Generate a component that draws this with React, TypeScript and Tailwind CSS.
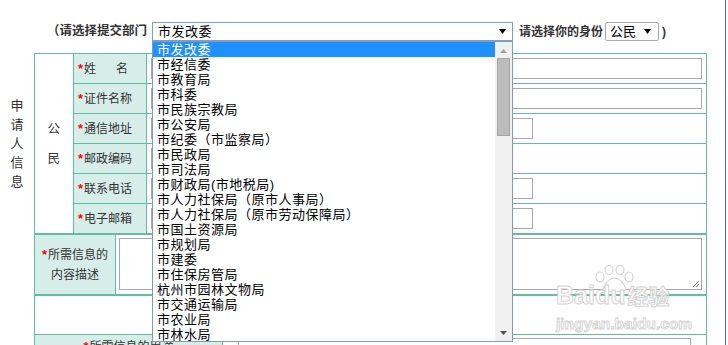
import React from 'react';

const depts = [
  '市发改委',
  '市经信委',
  '市教育局',
  '市科委',
  '市民族宗教局',
  '市公安局',
  '市纪委（市监察局）',
  '市民政局',
  '市司法局',
  '市财政局(市地税局)',
  '市人力社保局（原市人事局）',
  '市人力社保局（原市劳动保障局）',
  '市国土资源局',
  '市规划局',
  '市建委',
  '市住保房管局',
  '杭州市园林文物局',
  '市交通运输局',
  '市农业局',
  '市林水局',
];

const rows: { label: React.ReactNode; input: string }[] = [
  { label: <>姓<span className="ml-[20px]">名</span></>, input: 'w-[551px]' },
  { label: '证件名称', input: 'w-[551px]' },
  { label: '通信地址', input: 'w-[382px]' },
  { label: '邮政编码', input: 'w-[120px]' },
  { label: '联系电话', input: 'w-[382px]' },
  { label: '电子邮箱', input: 'w-[382px]' },
];

function Caret({ className }: { className?: string }) {
  return (
    <svg width="7" height="5" viewBox="0 0 7 5" className={className}>
      <path d="M0 0h7L3.5 5z" fill="currentColor" />
    </svg>
  );
}

function Star() {
  return <span className="text-[#ff0000] text-[13px] font-bold mr-[1px]">*</span>;
}

export default function App() {
  return (
    <div className="relative w-[728px] h-[345px] overflow-hidden bg-white font-['Liberation_Sans','Noto_Sans_CJK_SC',sans-serif] text-[#333]">
      <div className="w-[726px] h-[345px] border-r border-[#47786e]">
        {/* header */}
        <div className="flex items-center pt-[22px] pl-[47px] h-[41px]">
          <span className="w-[105px] text-[12.5px] font-bold whitespace-nowrap">（请选择提交部门</span>
          <div className="w-[361px] h-[19px] border border-[#7a9fd6] flex items-center justify-between pl-[5px] pr-[6px] text-[13px] tracking-[0.5px] text-black">
            <span>市发改委</span>
            <Caret />
          </div>
          <span className="ml-[6px] text-[12px] font-bold whitespace-nowrap">请选择你的身份</span>
          <div className="ml-[2px] w-[54px] h-[19px] rounded-[2px] border border-[#a9a9a9] flex items-center justify-between pl-[4px] pr-[7px] text-[13px] text-black">
            <span>公民</span>
            <Caret />
          </div>
          <span className="ml-[3px] text-[12px] font-bold">)</span>
        </div>

        {/* applicant block */}
        <div className="flex mt-[12px]">
          <div className="w-[34px] flex items-center justify-center">
            <div className="w-[14px] text-[13px] leading-[19px] text-center">申请人信息</div>
          </div>
          <div className="w-[673px] border border-[#5fbf9f] flex">
            <div className="w-[39px] border-r border-[#5fbf9f] flex items-center justify-center">
              <div className="w-[13px] text-[12.5px] leading-[30px]">公民</div>
            </div>
            <div className="flex-1 flex flex-col">
              {rows.map((r, i) => (
                <div
                  key={i}
                  className={`flex ${i < 5 ? 'h-[30px] border-b border-[#5fbf9f]' : 'h-[29px]'}`}
                >
                  <div className="w-[73px] border-r border-[#5fbf9f] bg-[#d7ede8] flex items-center pl-[4px] text-[12px]">
                    <Star />
                    {r.label}
                  </div>
                  <div className="flex-1 flex items-center pl-[4px]">
                    <div className={`${r.input} h-[21px] border border-[#a9a9a9]`} />
                  </div>
                </div>
              ))}
            </div>
          </div>
        </div>

        {/* description block */}
        <div className="ml-[34px] w-[673px] h-[61px] border border-[#5fbf9f] flex">
          <div className="w-[81px] border-r border-[#5fbf9f] bg-[#d7ede8] flex flex-col items-center justify-center text-[12px] leading-[20px]">
            <span>
              <Star />所需信息的
            </span>
            <span>内容描述</span>
          </div>
          <div className="flex-1 pt-[3px] pl-[3px]">
            <div className="relative w-[583px] h-[52px] border border-[#a9a9a9]">
              <svg width="8" height="8" viewBox="0 0 8 8" className="absolute right-[1px] bottom-[1px] text-[#777]">
                <path d="M7 1L1 7M7 4L4 7" stroke="currentColor" strokeWidth="1" />
              </svg>
            </div>
          </div>
        </div>

        {/* purpose block */}
        <div className="ml-[34px] w-[673px] border border-[#5fbf9f]">
          <div className="h-[39px] border-b border-[#5fbf9f]" />
          <div className="flex h-[40px]">
            <div className="w-[188px] border-r border-[#5fbf9f] bg-[#d7ede8] flex justify-center pt-[2px] text-[12px] leading-[20px]">
              <span>
                <Star />所需信息的用途
              </span>
            </div>
            <div className="flex-1 pl-[15px] pt-[3px]">
              <div className="w-[453px] h-[24px] border border-[#a9a9a9]" />
            </div>
          </div>
        </div>
      </div>

      {/* open dropdown list */}
      <div className="absolute left-[152px] top-[41px] w-[361px] h-[301px] border border-[#7f9db9] bg-white flex">
        <ul className="flex-1 text-[13px] leading-[15px] tracking-[0.5px] text-black">
          {depts.map((d, i) => (
            <li
              key={d}
              className={`h-[15px] pl-[4px] whitespace-nowrap ${i === 0 ? 'bg-[#1e90ff] text-white' : ''}`}
            >
              {d}
            </li>
          ))}
        </ul>
        <div className="w-[17px] bg-[#f0f0f0] flex flex-col items-center">
          <svg width="7" height="4" viewBox="0 0 7 4" className="mt-[7px] text-[#a3a3a3]">
            <path d="M0 4h7L3.5 0z" fill="currentColor" />
          </svg>
          <div className="mt-[5px] w-[13px] h-[78px] bg-[#bcbcbc] border border-[#a6a6a6]" />
          <div className="flex-1" />
          <svg width="7" height="4" viewBox="0 0 7 4" className="mb-[6px] text-[#505050]">
            <path d="M0 0h7L3.5 4z" fill="currentColor" />
          </svg>
        </div>
      </div>

      {/* watermark */}
      <div className="absolute left-[556px] top-[265px] w-[134px] pointer-events-none select-none">
        <svg width="46" height="27" viewBox="0 0 46 27" className="ml-[36px]">
          <g fill="white" stroke="#d4d4d4" strokeWidth="1.2">
            <ellipse cx="8" cy="12" rx="4" ry="5" />
            <ellipse cx="17" cy="5" rx="4" ry="4.5" />
            <ellipse cx="28" cy="5" rx="4" ry="4.5" />
            <ellipse cx="37" cy="12" rx="4" ry="5" />
            <path d="M22.5 13c-6 0-11 8-11 11s3 2.5 11 2.5 11 .5 11-2.5-5-11-11-11z" />
          </g>
        </svg>
        <div className="-mt-[10px] flex items-baseline text-[25px] font-bold leading-[26px] text-white [-webkit-text-stroke:1px_#d4d4d4]">
          <span>Baidu</span>
          <span className="ml-[2px] text-[21px]">经验</span>
        </div>
        <div className="mt-[6px] text-[15.5px] font-bold leading-[16px] text-white [-webkit-text-stroke:1px_#d4d4d4]">
          jingyan.baidu.com
        </div>
      </div>
    </div>
  );
}
